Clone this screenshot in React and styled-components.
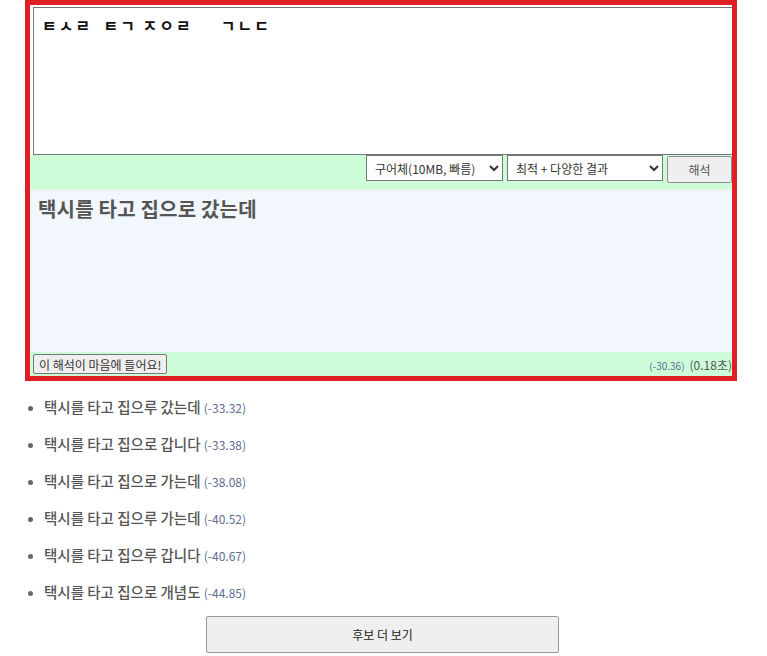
import React from 'react';
import styled, { createGlobalStyle } from 'styled-components';

const Global = createGlobalStyle`
  html, body { margin: 0; padding: 0; background: #fff; }
  body { font-family: "Noto Sans CJK KR", "Noto Sans", sans-serif; color: #555; }
`;

const Page = styled.div`
  width: 767px;
  height: 656px;
  overflow: hidden;
`;

const Panel = styled.div`
  margin-left: 25px;
  width: 702px;
  border: 5px solid #e11d26;
  overflow: hidden;
  background: #cdfcd9;
`;

const InputArea = styled.div`
  background: #fff;
  padding: 2px 0 0 3px;
`;

const Input = styled.textarea`
  display: block;
  box-sizing: border-box;
  width: 720px;
  height: 148px;
  margin: 0;
  border: 1px solid #767676;
  padding: 5px 8px;
  resize: none;
  font-family: "Noto Sans CJK KR", sans-serif;
  font-weight: 700;
  font-size: 16px;
  letter-spacing: 2px;
  color: #111;
  outline: none;
  white-space: pre;
`;

const Toolbar = styled.div`
  display: flex;
  justify-content: flex-end;
  align-items: flex-start;
  gap: 4px;
  height: 34px;
`;

const Select = styled.select`
  box-sizing: border-box;
  width: ${p => p.$w}px;
  height: 26px;
  border: 1px solid #767676;
  border-radius: 0;
  background: #fff;
  font-family: "Noto Sans CJK KR", sans-serif;
  font-size: 12px;
  color: #333;
  padding: 0 4px;
`;

const Button = styled.button`
  box-sizing: border-box;
  border: 1px solid #8f8f8f;
  border-radius: 2px;
  background: #efefef;
  font-family: "Noto Sans CJK KR", sans-serif;
  font-size: 12px;
  color: #333;
  padding: 0;
  cursor: pointer;
`;

const RunButton = styled(Button)`
  width: 65px;
  height: 27px;
  margin-top: 1px;
  color: #555;
`;

const Result = styled.div`
  box-sizing: border-box;
  height: 163px;
  border-top: 2px solid #e8f5ee;
  background: #f2f6fd;
  padding: 3px 8px;
`;

const ResultText = styled.div`
  font-size: 20px;
  font-weight: 700;
  color: #555;
  letter-spacing: 0.2px;
`;

const Footer = styled.div`
  display: flex;
  justify-content: space-between;
  align-items: center;
  height: 24px;
  padding-left: 3px;
`;

const LikeButton = styled(Button)`
  height: 20px;
  padding: 0 5px;
  font-size: 12px;
  color: #333;
  border-color: #777;
`;

const Meta = styled.div`
  display: flex;
  align-items: baseline;
  gap: 5px;
  white-space: nowrap;
`;

const Score = styled.span`
  font-size: ${p => p.$size || 10}px;
  font-weight: 400;
  color: #5d6c93;
  vertical-align: baseline;
  line-height: 1;
`;

const Time = styled.span`
  font-size: 12px;
  color: #555;
`;

const List = styled.ul`
  margin: 7px 0 0;
  padding: 0 0 0 44px;
  list-style: disc;
`;

const Item = styled.li`
  height: 37px;
  line-height: 37px;
  font-size: 14.5px;
  font-weight: 500;
  color: #555;
  &::marker { color: #666; font-size: 12px; }
`;

const MoreButton = styled(Button)`
  display: block;
  width: 353px;
  height: 37px;
  margin: 6px 0 0 206px;
  color: #222;
  border-color: #999;
`;

const candidates = [
  ['택시를 타고 집으루 갔는데', '-33.32'],
  ['택시를 타고 집으로 갑니다', '-33.38'],
  ['택시를 타고 집으로 가는데', '-38.08'],
  ['택시를 타고 집으루 가는데', '-40.52'],
  ['택시를 타고 집으루 갑니다', '-40.67'],
  ['택시를 타고 집으로 개념도', '-44.85'],
];

export default function App() {
  return (
    <Page>
      <Global />
      <Panel>
        <InputArea>
          <Input defaultValue={'ㅌㅅㄹ  ㅌㄱ ㅈㅇㄹ     ㄱㄴㄷ'} spellCheck={false} />
        </InputArea>
        <Toolbar>
          <Select $w={137} defaultValue="a">
            <option value="a">구어체(10MB, 빠름)</option>
          </Select>
          <Select $w={156} defaultValue="b">
            <option value="b">최적 + 다양한 결과</option>
          </Select>
          <RunButton>해석</RunButton>
        </Toolbar>
        <Result>
          <ResultText>택시를 타고 집으로 갔는데</ResultText>
        </Result>
        <Footer>
          <LikeButton>이 해석이 마음에 들어요!</LikeButton>
          <Meta>
            <Score>(-30.36)</Score>
            <Time>(0.18초)</Time>
          </Meta>
        </Footer>
      </Panel>
      <List>
        {candidates.map(([t, s]) => (
          <Item key={t + s}>
            {t} <Score $size={12}>({s})</Score>
          </Item>
        ))}
      </List>
      <MoreButton>후보 더 보기</MoreButton>
    </Page>
  );
}
